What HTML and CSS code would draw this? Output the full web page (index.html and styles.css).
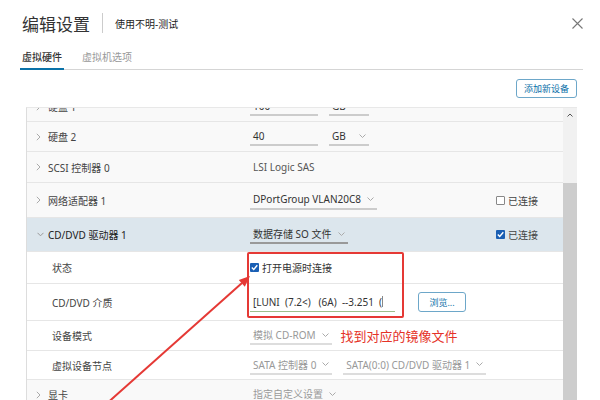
FILE: index.html
```html
<!DOCTYPE html>
<html lang="zh-CN">
<head>
    <meta charset="UTF-8">
    <meta name="viewport" content="width=device-width, initial-scale=1.0">
    <title>编辑设置</title>
    <link rel="stylesheet" href="styles.css">
</head>
<body>

    <div class="header">
        <h1 class="title">编辑设置</h1>
        <span class="sep"></span>
        <span class="subtitle">使用不明-测试</span>
        <svg class="close" width="11" height="11" viewBox="0 0 11 11"><path d="M0.5 0.5 L10.5 10.5 M10.5 0.5 L0.5 10.5" stroke="#777" stroke-width="1.1" fill="none"/></svg>
    </div>

    <div class="tabs">
        <span class="tab active">虚拟硬件</span>
        <span class="tab">虚拟机选项</span>
    </div>

    <div class="toolbar">
        <button class="btn">添加新设备</button>
    </div>

    <div class="grid">
        <div class="table">
            <div class="rows">
                <!-- 硬盘 1 (被滚动遮住一半) -->
                <div class="row top h30">
                    <div class="label"><svg class="chev" width="5" height="8" viewBox="0 0 5 8"><path d="M0.8 0.8 L4 4 L0.8 7.2" stroke="#aaa" fill="none"/></svg>硬盘 1</div>
                    <div class="value">
                        <span class="input w68">100</span>
                        <span class="select w40">GB<svg class="dd" width="7" height="4" viewBox="0 0 7 4"><path d="M0.5 0.5 L3.5 3.5 L6.5 0.5" stroke="#aaa" fill="none"/></svg></span>
                    </div>
                </div>
                <div class="row top h30">
                    <div class="label"><svg class="chev" width="5" height="8" viewBox="0 0 5 8"><path d="M0.8 0.8 L4 4 L0.8 7.2" stroke="#aaa" fill="none"/></svg>硬盘 2</div>
                    <div class="value">
                        <span class="input w68">40</span>
                        <span class="select w40">GB<svg class="dd" width="7" height="4" viewBox="0 0 7 4"><path d="M0.5 0.5 L3.5 3.5 L6.5 0.5" stroke="#aaa" fill="none"/></svg></span>
                    </div>
                </div>
                <div class="row top h31">
                    <div class="label"><svg class="chev" width="5" height="8" viewBox="0 0 5 8"><path d="M0.8 0.8 L4 4 L0.8 7.2" stroke="#aaa" fill="none"/></svg>SCSI 控制器 0</div>
                    <div class="value"><span class="plain">LSI Logic SAS</span></div>
                </div>
                <div class="row top h35">
                    <div class="label"><svg class="chev" width="5" height="8" viewBox="0 0 5 8"><path d="M0.8 0.8 L4 4 L0.8 7.2" stroke="#aaa" fill="none"/></svg>网络适配器 1</div>
                    <div class="value">
                        <span class="select">DPortGroup VLAN20C8<svg class="dd" width="7" height="4" viewBox="0 0 7 4"><path d="M0.5 0.5 L3.5 3.5 L6.5 0.5" stroke="#aaa" fill="none"/></svg></span>
                    </div>
                    <div class="extra"><span class="check"></span>已连接</div>
                </div>
                <div class="row sel h34">
                    <div class="label strong"><svg class="chev down" width="7" height="5" viewBox="0 0 7 5"><path d="M0.5 0.8 L3.5 3.8 L6.5 0.8" stroke="#999" fill="none"/></svg>CD/DVD 驱动器 1</div>
                    <div class="value">
                        <span class="select dark">数据存储 SO 文件<svg class="dd" width="7" height="4" viewBox="0 0 7 4"><path d="M0.5 0.5 L3.5 3.5 L6.5 0.5" stroke="#aaa" fill="none"/></svg></span>
                    </div>
                    <div class="extra"><span class="check on"><svg width="9" height="9" viewBox="0 0 9 9"><path d="M1.8 4.6 L3.7 6.5 L7.3 2.3" stroke="#fff" stroke-width="1.4" fill="none"/></svg></span>已连接</div>
                </div>
                <div class="row h32">
                    <div class="label sub">状态</div>
                    <div class="value">
                        <label class="opt"><span class="check on"><svg width="9" height="9" viewBox="0 0 9 9"><path d="M1.8 4.6 L3.7 6.5 L7.3 2.3" stroke="#fff" stroke-width="1.4" fill="none"/></svg></span>打开电源时连接</label>
                    </div>
                </div>
                <div class="row h37">
                    <div class="label sub">CD/DVD 介质</div>
                    <div class="value">
                        <span class="input file">[LUNI  (7.2&lt;)   (6A)  --3.251  (<span class="caret"></span></span>
                        <button class="btn small">浏览...</button>
                    </div>
                </div>
                <div class="row h30">
                    <div class="label sub">设备模式</div>
                    <div class="value">
                        <span class="select muted">模拟 CD-ROM<svg class="dd" width="7" height="4" viewBox="0 0 7 4"><path d="M0.5 0.5 L3.5 3.5 L6.5 0.5" stroke="#aaa" fill="none"/></svg></span>
                        <span class="note">找到对应的镜像文件</span>
                    </div>
                </div>
                <div class="row h29">
                    <div class="label sub">虚拟设备节点</div>
                    <div class="value">
                        <span class="select muted">SATA 控制器 0<svg class="dd" width="7" height="4" viewBox="0 0 7 4"><path d="M0.5 0.5 L3.5 3.5 L6.5 0.5" stroke="#aaa" fill="none"/></svg></span>
                        <span class="select muted">SATA(0:0) CD/DVD 驱动器 1<svg class="dd" width="7" height="4" viewBox="0 0 7 4"><path d="M0.5 0.5 L3.5 3.5 L6.5 0.5" stroke="#aaa" fill="none"/></svg></span>
                    </div>
                </div>
                <div class="row top h30">
                    <div class="label"><svg class="chev" width="5" height="8" viewBox="0 0 5 8"><path d="M0.8 0.8 L4 4 L0.8 7.2" stroke="#aaa" fill="none"/></svg>显卡</div>
                    <div class="value">
                        <span class="select muted">指定自定义设置<svg class="dd" width="7" height="4" viewBox="0 0 7 4"><path d="M0.5 0.5 L3.5 3.5 L6.5 0.5" stroke="#aaa" fill="none"/></svg></span>
                    </div>
                </div>
            </div>
        </div>
        <div class="scrollbar">
            <svg class="up" width="6" height="4" viewBox="0 0 6 4"><path d="M0.5 3.5 L3 1 L5.5 3.5" stroke="#555" fill="none"/></svg>
            <div class="thumb"></div>
        </div>
    </div>

    <!-- 标注 -->
    <div class="mark-box"></div>
    <svg class="mark-arrow" width="600" height="400" viewBox="0 0 600 400">
        <line x1="104" y1="406" x2="242" y2="283" stroke="#e53935" stroke-width="2"/>
        <polygon points="250,276 244.8,286.7 238.8,279.9" fill="#e53935"/>
    </svg>

</body>
</html>
```

FILE: styles.css
```css
* {
    box-sizing: border-box;
}
body {
    margin: 0;
    width: 600px;
    height: 400px;
    overflow: hidden;
    position: relative;
    background: #fff;
    color: #333;
    font-family: "Noto Sans", "Noto Sans CJK SC", sans-serif;
}
.header {
    height: 46px;
    display: flex;
    align-items: center;
    padding: 0 17px 0 22px;
}
.title {
    margin: 0;
    font-size: 17px;
    font-weight: 400;
    color: #333;
}
.sep {
    width: 1px;
    height: 20px;
    background: #ccc;
    margin: 0 12px;
}
.subtitle {
    font-size: 10px;
    color: #222;
}
.close {
    margin-left: auto;
}
.tabs {
    display: flex;
    gap: 16px;
    margin: 0 17px 0 20px;
    border-bottom: 1px solid #d5d5d5;
}
.tab {
    font-size: 10px;
    line-height: 14px;
    padding: 4px 2px 4px;
    color: #999;
    border-bottom: 2px solid transparent;
    margin-bottom: -1px;
}
.tab.active {
    color: #333;
    font-weight: 500;
    border-bottom-color: #0a72a8;
}
.toolbar {
    display: flex;
    justify-content: flex-end;
    padding: 9px 23px 9px 0;
}
.btn {
    font-family: inherit;
    font-size: 9px;
    height: 19px;
    padding: 0 7px;
    background: #fff;
    color: #0a6fa8;
    border: 1px solid #6da7c9;
    border-radius: 3px;
}
.btn.small {
    height: 20px;
    width: 48px;
    margin-left: 12px;
    padding: 0;
}
.grid {
    display: flex;
    margin: 0 23px 0 26px;
    height: 293px;
    border-left: 1px solid #ddd;
    border-top: 1px solid #e8e8e8;
    overflow: hidden;
}
.table {
    flex: 1;
    overflow: hidden;
}
.rows {
    margin-top: -16px;
}
.row {
    display: flex;
    align-items: center;
    border-bottom: 1px solid #e6e6e6;
    font-size: 10px;
}
.row.top {
    background: #f9f9f9;
}
.row.sel {
    background: #dce6ed;
}
.h29 { height: 29px; }
.h30 { height: 30px; }
.h31 { height: 31px; }
.h32 { height: 32px; }
.h34 { height: 34px; }
.h35 { height: 35px; }
.h37 { height: 37px; }
.label {
    width: 223px;
    padding-left: 9px;
    display: flex;
    align-items: center;
    color: #444;
}
.label.sub {
    padding-left: 25px;
}
.label.strong {
    color: #222;
}
.chev {
    margin-right: 7px;
}
.chev.down {
    margin-left: 1px;
    margin-right: 4px;
}
.value {
    flex: 1;
    display: flex;
    align-items: center;
    gap: 11px;
}
.opt {
    display: flex;
    align-items: center;
    color: #333;
}
.plain {
    padding-left: 3px;
    color: #555;
}
.input, .select {
    display: inline-flex;
    align-items: center;
    height: 19px;
    padding: 0 3px;
    border-bottom: 2px solid #ccc;
    color: #333;
}
.w68 { width: 68px; }
.w40 { width: 40px; }
.select .dd {
    margin-left: 6px;
}
.w40 .dd {
    margin-left: auto;
}
.select.dark {
    border-bottom-color: #999;
}
.select.muted {
    color: #999;
    border-bottom-color: #ddd;
}
.input.file {
    width: 145px;
    white-space: pre;
    border-bottom: 1px solid #9cbf8c;
}
.caret {
    display: inline-block;
    width: 1px;
    height: 11px;
    background: #888;
}
.note {
    margin-left: -2px;
    font-size: 13px;
    color: #e53228;
}
.extra {
    width: 67px;
    display: flex;
    align-items: center;
    color: #444;
}
.check {
    display: inline-flex;
    width: 9px;
    height: 9px;
    border: 1px solid #888;
    border-radius: 1px;
    margin-right: 3px;
    background: #fff;
}
.check.on {
    border: none;
    background: #1a5fb4;
}
.scrollbar {
    width: 14px;
    background: #f1f1f1;
    display: flex;
    flex-direction: column;
    align-items: center;
}
.up {
    margin-top: 5px;
}
.thumb {
    margin-top: 66px;
    width: 100%;
    flex: 1;
    background: #cdcdcd;
}
.mark-box {
    position: absolute;
    left: 247px;
    top: 252px;
    width: 157px;
    height: 66px;
    border: 2px solid #e53935;
    border-radius: 2px;
}
.mark-arrow {
    position: absolute;
    left: 0;
    top: 0;
}
```
